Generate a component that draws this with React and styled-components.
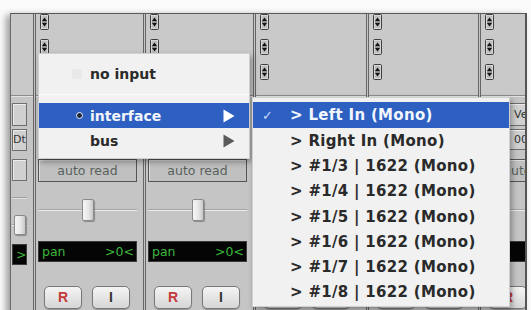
import React from 'react';
import styled, { createGlobalStyle } from 'styled-components';

const Global = createGlobalStyle`
  html, body { margin: 0; padding: 0; background: #fbfbfb; }
  body { width: 531px; height: 310px; overflow: hidden; font-family: "DejaVu Sans", sans-serif; }
  * { box-sizing: border-box; }
`;

const Page = styled.div`
  position: relative;
  width: 531px;
  height: 310px;
  padding: 13px 0 0 10px;
  overflow: hidden;
`;

const Window = styled.div`
  width: 517px;
  height: 310px;
  border-top: 1px solid #5a5a5a;
  border-left: 1px solid #6a6a6a;
  border-right: 2px solid #555;
  background: #c5c5c5;
  box-shadow: -4px 2px 7px rgba(0, 0, 0, 0.38);
  display: flex;
  overflow: hidden;
`;

const Strip = styled.div`
  flex: 0 0 ${(p) => p.$w}px;
  width: ${(p) => p.$w}px;
  display: flex;
  flex-direction: column;
  border-left: ${(p) => (p.$edge ? 'none' : '3px double #666')};
`;

const Inserts = styled.div`
  height: 82px;
  flex: 0 0 82px;
  background: #c9c9c9;
  border-bottom: 1px solid #8c8c8c;
  box-shadow: 0 1px 0 #e2e2e2;
  display: flex;
  flex-direction: column;
  gap: 9px;
  padding-left: 4px;
`;

const Lower = styled.div`
  display: flex;
  flex-direction: column;
  padding: 7px 6px 0 2px;
`;

const Box = styled.div`
  height: ${(p) => p.$h}px;
  margin-top: ${(p) => p.$mt || 0}px;
  border: 1px solid #6e6e6e;
  background: #d0d0d0;
  box-shadow: inset 1px 1px 0 #ececec;
  font-size: 11px;
  line-height: ${(p) => p.$h - 2}px;
  color: #333;
  padding-left: ${(p) => p.$pl || 0}px;
  white-space: nowrap;
  overflow: hidden;
`;

const AutoBtn = styled.div`
  height: 23px;
  margin-top: 9px;
  border: 1px solid #545454;
  background: #c0c0c0;
  box-shadow: inset 1px 1px 0 #dcdcdc;
  font-family: "DejaVu Sans", sans-serif;
  font-size: 12.5px;
  line-height: 21px;
  text-align: center;
  color: #58625c;
  white-space: nowrap;
  overflow: hidden;
`;

const FaderArea = styled.div`
  height: ${(p) => p.$h}px;
  margin-top: ${(p) => p.$mt || 0}px;
  display: flex;
  align-items: center;
  justify-content: ${(p) => (p.$left ? 'flex-start' : 'center')};
  padding-left: ${(p) => (p.$left ? 2 : 0)}px;
  background: linear-gradient(
    to bottom,
    transparent ${(p) => p.$line}px,
    #a4a4a4 ${(p) => p.$line}px,
    #a4a4a4 ${(p) => p.$line + 1}px,
    #ececec ${(p) => p.$line + 1}px,
    #ececec ${(p) => p.$line + 2}px,
    transparent ${(p) => p.$line + 2}px
  );
`;

const Knob = styled.div`
  width: 12px;
  height: ${(p) => p.$h || 22}px;
  border: 1px solid #8a8a8a;
  border-radius: 2px;
  background: linear-gradient(to right, #f7f7f7, #e4e4e4 60%, #c8c8c8);
  box-shadow: 1px 1px 1px rgba(0, 0, 0, 0.3);
`;

const Pan = styled.div`
  height: 21px;
  margin-top: ${(p) => p.$mt || 0}px;
  background: #050505;
  border: 1px solid #3a3a3a;
  display: flex;
  justify-content: space-between;
  align-items: center;
  padding: 0 2px 0 3px;
  color: #3cb83c;
  font-family: "DejaVu Sans", sans-serif;
  font-size: 12.5px;
  white-space: nowrap;
  overflow: hidden;
`;

const BtnRow = styled.div`
  display: flex;
  gap: 10px;
  margin-top: 24px;
  padding-left: 6px;
`;

const RecBtn = styled.div`
  width: 38px;
  height: 23px;
  flex: 0 0 38px;
  border: 1px solid #787878;
  border-radius: 5px;
  background: linear-gradient(to bottom, #f4f4f4, #d6d6d6);
  box-shadow: 0 1px 1px rgba(0, 0, 0, 0.25);
  font-family: "Liberation Sans", sans-serif;
  font-weight: bold;
  font-size: 14px;
  line-height: 21px;
  text-align: center;
  color: ${(p) => p.$c};
`;

const EdgeLower = styled.div`
  display: flex;
  flex-direction: column;
  padding: 7px 6px 0 1px;
`;

const Divider = styled.div`
  height: 2px;
  margin-top: ${(p) => p.$mt}px;
  border-top: 1px solid #a0a0a0;
  border-bottom: 1px solid #e0e0e0;
`;

const StepperSvg = () => (
  <svg width="9" height="16" viewBox="0 0 9 16">
    <rect x="0.5" y="0.5" width="8" height="15" rx="1" fill="#bdbdbd" stroke="#3e3e3e" />
    <rect x="1.5" y="1.5" width="6" height="13" fill="none" stroke="#e6e6e6" strokeWidth="0.6" />
    <polygon points="2,7 4.5,3.5 7,7" fill="#111" />
    <rect x="2" y="7.6" width="5" height="0.8" fill="#555" />
    <polygon points="2,9 4.5,12.5 7,9" fill="#111" />
  </svg>
);

const Menu = styled.div`
  position: absolute;
  left: ${(p) => p.$x}px;
  top: ${(p) => p.$y}px;
  width: ${(p) => p.$w}px;
  height: ${(p) => p.$h}px;
  background: #f1f1f1;
  border: 1px solid #d0d0d0;
  box-shadow: 2px 3px 6px rgba(0, 0, 0, 0.35);
  padding-top: ${(p) => p.$pt}px;
  display: flex;
  flex-direction: column;
`;

const Item = styled.div`
  height: ${(p) => p.$rh || 25}px;
  flex: 0 0 ${(p) => p.$rh || 25}px;
  display: flex;
  align-items: center;
  padding-left: ${(p) => p.$pl}px;
  background: ${(p) => (p.$on ? '#2d60c1' : 'transparent')};
  color: ${(p) => (p.$on ? '#f3f6fd' : '#2a2a2a')};
  font-family: "DejaVu Sans", sans-serif;
  font-weight: bold;
  font-size: ${(p) => p.$fs}px;
  letter-spacing: ${(p) => p.$ls || 0}px;
  white-space: nowrap;
`;

const Mark = styled.span`
  width: ${(p) => p.$w}px;
  flex: 0 0 ${(p) => p.$w}px;
  display: flex;
  align-items: center;
  justify-content: flex-start;
  font-weight: bold;
  font-size: 13px;
  letter-spacing: 0;
  color: #c9dafc;
`;

const Ghost = styled.span`
  width: 10px;
  height: 10px;
  background: #e9e9e9;
  border-radius: 1px;
`;

const Radio = styled.span`
  width: 7px;
  height: 7px;
  margin-left: 4px;
  border-radius: 50%;
  background: #1f2a3e;
  border: 1.5px solid #e8eefb;
`;

const Sep = styled.div`
  height: 17px;
  flex: 0 0 17px;
  display: flex;
  align-items: center;
  &::after {
    content: '';
    display: block;
    width: 100%;
    height: 1px;
    background: #fbfbfb;
  }
`;

const Arrow = styled.svg`
  margin-left: auto;
  margin-right: 14px;
`;

const SubArrow = ({ color }) => (
  <Arrow width="12" height="14" viewBox="0 0 12 14">
    <polygon points="0.5,0.5 11.5,7 0.5,13.5" fill={color} />
  </Arrow>
);

const channels = [
  { w: 110, io: ['', ''] },
  { w: 110, io: ['', ''] },
  { w: 113, io: ['', ''] },
  { w: 112, io: ['', ''] },
  { w: 112, io: ['Ve', '00'] },
];

const subItems = [
  '> Left In (Mono)',
  '> Right In (Mono)',
  '> #1/3 | 1622 (Mono)',
  '> #1/4 | 1622 (Mono)',
  '> #1/5 | 1622 (Mono)',
  '> #1/6 | 1622 (Mono)',
  '> #1/7 | 1622 (Mono)',
  '> #1/8 | 1622 (Mono)',
];

function Channel({ w, io }) {
  return (
    <Strip $w={w}>
      <Inserts>
        <StepperSvg />
        <StepperSvg />
        <StepperSvg />
      </Inserts>
      <Lower>
        <Box $h={23} $pl={30}>{io[0]}</Box>
        <Box $h={21} $mt={3} $pl={30}>{io[1]}</Box>
        <AutoBtn>auto read</AutoBtn>
        <FaderArea $h={56} $line={27}>
          <Knob />
        </FaderArea>
        <Pan $mt={3}>
          <span>pan</span>
          <span>&gt;0&lt;</span>
        </Pan>
        <BtnRow>
          <RecBtn $c="#c43a3a">R</RecBtn>
          <RecBtn $c="#333">I</RecBtn>
        </BtnRow>
      </Lower>
    </Strip>
  );
}

function EdgeStrip() {
  return (
    <Strip $w={22} $edge>
      <Inserts />
      <EdgeLower>
        <Box $h={23} />
        <Box $h={22} $mt={3} $pl={0}>Dt</Box>
        <Box $h={22} $mt={8} />
        <Divider $mt={16} />
        <FaderArea $h={24} $mt={14} $line={11} $left>
          <Knob $h={20} />
        </FaderArea>
        <Pan $mt={7}>
          <span>&gt;</span>
        </Pan>
      </EdgeLower>
    </Strip>
  );
}

export default function App() {
  return (
    <>
      <Global />
      <Page>
        <Window>
          <EdgeStrip />
          {channels.map((c, i) => (
            <Channel key={i} w={c.w} io={c.io} />
          ))}
        </Window>

        <Menu $x={38} $y={53} $w={212} $h={106} $pt={7}>
          <Item $pl={33} $fs={14}>
            <Mark $w={18}><Ghost /></Mark>no input
          </Item>
          <Sep />
          <Item $pl={33} $fs={14} $on>
            <Mark $w={18}><Radio /></Mark>interface
            <SubArrow color="#ffffff" />
          </Item>
          <Item $pl={33} $fs={14}>
            <Mark $w={18} />bus
            <SubArrow color="#5a5a5a" />
          </Item>
        </Menu>

        <Menu $x={252} $y={97} $w={258} $h={210} $pt={4}>
          {subItems.map((t, i) => (
            <Item key={t} $pl={9} $fs={15} $ls={0.3} $rh={i === 0 ? 26 : 25.3} $on={i === 0}>
              <Mark $w={28}>{i === 0 ? '✓' : ''}</Mark>
              {t}
            </Item>
          ))}
        </Menu>
      </Page>
    </>
  );
}
